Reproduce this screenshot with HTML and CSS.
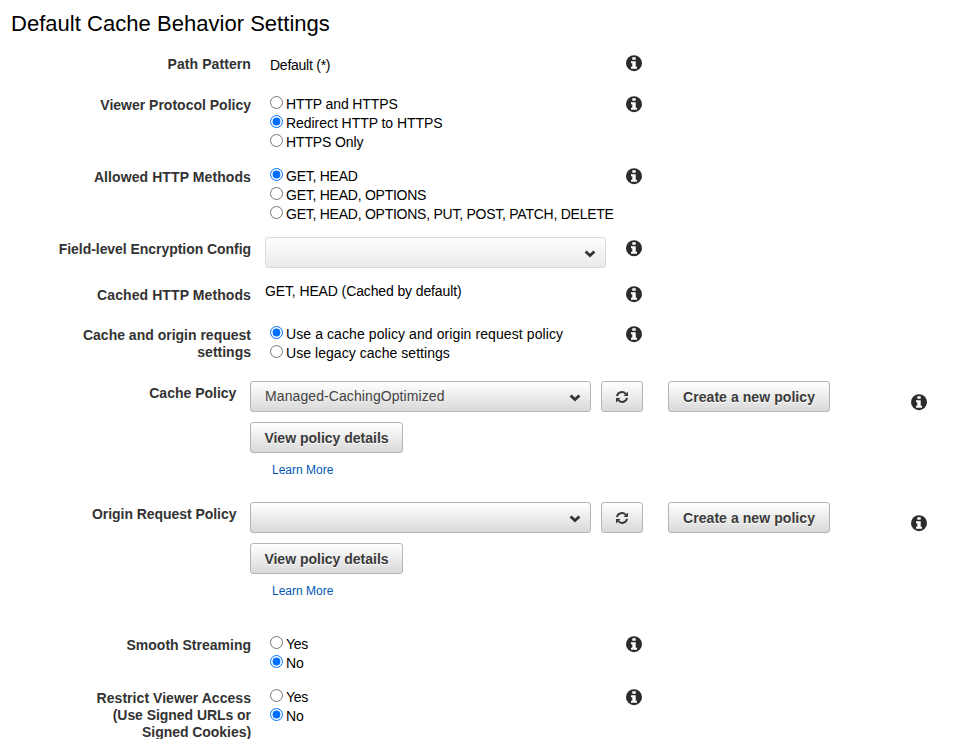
FILE: index.html
```html
<!DOCTYPE html>
<html lang="en">
<head>
<meta charset="utf-8">
<title>Default Cache Behavior Settings</title>
<link rel="stylesheet" href="styles.css">
</head>
<body>
<svg class="defs" width="0" height="0">
  <symbol id="info" viewBox="0 0 16 16"><circle cx="8" cy="8.2" r="8" fill="#2b2b2b"/><path fill="#fff" d="M6.3 2.2h3.4v2.6H6.3zM5 6.2h4.7v5.5H11v2.1H5v-2.1h1.3V8.2H5z"/></symbol>
  <symbol id="chevron" viewBox="0 0 12 8"><path d="M1.6 1.4 6 5.6l4.4-4.2" fill="none" stroke="#333" stroke-width="2.7"/></symbol>
  <symbol id="refresh" viewBox="0 0 12 12"><path d="M1 5.1A5 4.8 0 0 1 9.7 2.8M11 6.9A5 4.8 0 0 1 2.3 9.2" fill="none" stroke="#3a3a3a" stroke-width="2"/><path d="M12 .5V5H7.5zM0 11.5V7h4.5z" fill="#3a3a3a"/></symbol>
</svg>
<h1>Default Cache Behavior Settings</h1>
<form>
  <div class="row path">
    <div class="label loose">Path Pattern</div>
    <div class="field"><span class="value tight">Default (*)</span></div>
    <svg class="info"><use href="#info"/></svg>
  </div>
  <div class="row three">
    <div class="label">Viewer Protocol Policy</div>
    <div class="field options">
      <label><input type="radio" name="protocol"><span class="caps">HTTP and HTTPS</span></label>
      <label><input type="radio" name="protocol" checked><span class="snug">Redirect HTTP to HTTPS</span></label>
      <label><input type="radio" name="protocol"><span class="caps">HTTPS Only</span></label>
    </div>
    <svg class="info"><use href="#info"/></svg>
  </div>
  <div class="row three">
    <div class="label loose">Allowed HTTP Methods</div>
    <div class="field options">
      <label><input type="radio" name="methods" checked><span class="tight">GET, HEAD</span></label>
      <label><input type="radio" name="methods"><span class="tight">GET, HEAD, OPTIONS</span></label>
      <label><input type="radio" name="methods"><span class="tight">GET, HEAD, OPTIONS, PUT, POST, PATCH, DELETE</span></label>
    </div>
    <svg class="info"><use href="#info"/></svg>
  </div>
  <div class="row encryption">
    <div class="label snug">Field-level Encryption Config</div>
    <div class="field"><div class="select disabled"><span></span><svg class="chevron"><use href="#chevron"/></svg></div></div>
    <svg class="info"><use href="#info"/></svg>
  </div>
  <div class="row cached">
    <div class="label loose">Cached HTTP Methods</div>
    <div class="field"><span class="value caps">GET, HEAD (Cached by default)</span></div>
    <svg class="info"><use href="#info"/></svg>
  </div>
  <div class="row request">
    <div class="label">Cache and origin request settings</div>
    <div class="field options">
      <label><input type="radio" name="request" checked><span class="loose">Use a cache policy and origin request policy</span></label>
      <label><input type="radio" name="request"><span class="slightly-loose">Use legacy cache settings</span></label>
    </div>
    <svg class="info"><use href="#info"/></svg>
  </div>
  <div class="policy">
    <div class="label">Cache Policy</div>
    <div class="policy-body">
      <div class="controls">
        <div class="select"><span class="loose">Managed-CachingOptimized</span><svg class="chevron"><use href="#chevron"/></svg></div>
        <button type="button" class="btn refresh" aria-label="Refresh"><svg><use href="#refresh"/></svg></button>
        <button type="button" class="btn create"><span>Create a new policy</span></button>
      </div>
      <button type="button" class="btn view"><span>View policy details</span></button>
      <a class="learn">Learn More</a>
    </div>
    <svg class="info"><use href="#info"/></svg>
  </div>
  <div class="policy origin">
    <div class="label snug">Origin Request Policy</div>
    <div class="policy-body">
      <div class="controls">
        <div class="select"><span></span><svg class="chevron"><use href="#chevron"/></svg></div>
        <button type="button" class="btn refresh" aria-label="Refresh"><svg><use href="#refresh"/></svg></button>
        <button type="button" class="btn create"><span>Create a new policy</span></button>
      </div>
      <button type="button" class="btn view"><span>View policy details</span></button>
      <a class="learn">Learn More</a>
    </div>
    <svg class="info"><use href="#info"/></svg>
  </div>
  <div class="row yesno">
    <div class="label">Smooth Streaming</div>
    <div class="field options">
      <label><input type="radio" name="smooth"><span class="tight">Yes</span></label>
      <label><input type="radio" name="smooth" checked><span>No</span></label>
    </div>
    <svg class="info"><use href="#info"/></svg>
  </div>
  <div class="row yesno">
    <div class="label"><span class="slightly-loose">Restrict Viewer Access</span><br><span class="snug">(Use Signed URLs or</span><br><span class="snug">Signed Cookies)</span></div>
    <div class="field options">
      <label><input type="radio" name="restrict"><span class="tight">Yes</span></label>
      <label><input type="radio" name="restrict" checked><span>No</span></label>
    </div>
    <svg class="info"><use href="#info"/></svg>
  </div>
</form>
</body>
</html>
```
FILE: styles.css
```css
* { box-sizing: border-box; }
body {
  margin: 0;
  height: 739px;
  overflow: hidden;
  background: #fff;
  color: #000;
  font: 14px/17px "Liberation Sans", Arial, sans-serif;
}
svg { display: block; }
.defs { position: absolute; }
h1 {
  margin: 0;
  height: 55px;
  padding: 11px 0 0 11px;
  font-size: 22px;
  font-weight: 400;
  line-height: 26px;
  letter-spacing: .03px;
}
.tight { letter-spacing: -.25px; }
.caps { letter-spacing: -.12px; }
.snug { letter-spacing: -.05px; }
.slightly-loose { letter-spacing: .05px; }
.loose { letter-spacing: .09px; }
.row {
  display: grid;
  grid-template-columns: 251px 361px 16px;
  align-items: start;
  padding-top: 1px;
}
.row .label { padding-left: 50px; }
.row .field { padding-left: 14px; white-space: nowrap; }
.row .info { margin: -1px 0 0 14px; }
.label { color: #333; font-weight: 700; text-align: right; }
.info { width: 16px; height: 16px; overflow: visible; }
#info { overflow: visible; }
.path { height: 41px; }
.path .value { display: block; padding: 1px 0 0 5px; }
.three { height: 72px; }
.encryption { height: 46px; }
.cached { height: 40px; }
.request { height: 58px; }
.encryption .field, .cached .field { margin-top: -4px; }
.options { margin-top: -2px; }
.options label { display: flex; height: 19px; line-height: 19px; padding-left: 5px; }
input { width: 13px; height: 13px; margin: 1px 3px 0 0; flex: none; accent-color: #006fff; }
.select {
  display: flex;
  align-items: center;
  justify-content: space-between;
  width: 341px;
  height: 31px;
  padding: 0 9px 0 14px;
  border: 1px solid #b5b5b5;
  border-radius: 3px;
  background: linear-gradient(#fff, #d9d9d9);
  color: #444;
}
.disabled { border-color: #dadada; background: linear-gradient(#fdfdfd, #ebebeb); }
.chevron { width: 12px; height: 8px; margin-top: 3px; }
.policy {
  display: grid;
  grid-template-columns: 237px 661px 16px;
  height: 121px;
  align-items: start;
  padding-top: 1px;
}
.policy .label { padding-right: .6px; }
.policy-body { margin: -4px 0 0 13px; display: flex; flex-direction: column; align-items: flex-start; }
.policy .info { margin: 8.6px 0 0 13px; }
.origin { height: 131px; }
.controls { display: flex; }
.btn {
  height: 31px;
  padding: 1px 0 0;
  border: 1px solid #b5b5b5;
  border-radius: 3px;
  background: linear-gradient(#fff, #d9d9d9);
  color: #3a3a3a;
  font: 700 14px/17px "Liberation Sans", Arial, sans-serif;
  text-shadow: 0 1px 0 #fff;
  white-space: nowrap;
}
.btn svg { width: 12px; height: 12px; margin: 0 auto; }
.refresh { width: 42px; margin: 0 25px 0 10px; }
.create { width: 162px; letter-spacing: .07px; }
.view { width: 153px; margin-top: 10px; }
.learn { margin: 9px 0 0 22px; color: #0059b3; font-size: 12px; line-height: 16px; }
.yesno { height: 53px; }
```
